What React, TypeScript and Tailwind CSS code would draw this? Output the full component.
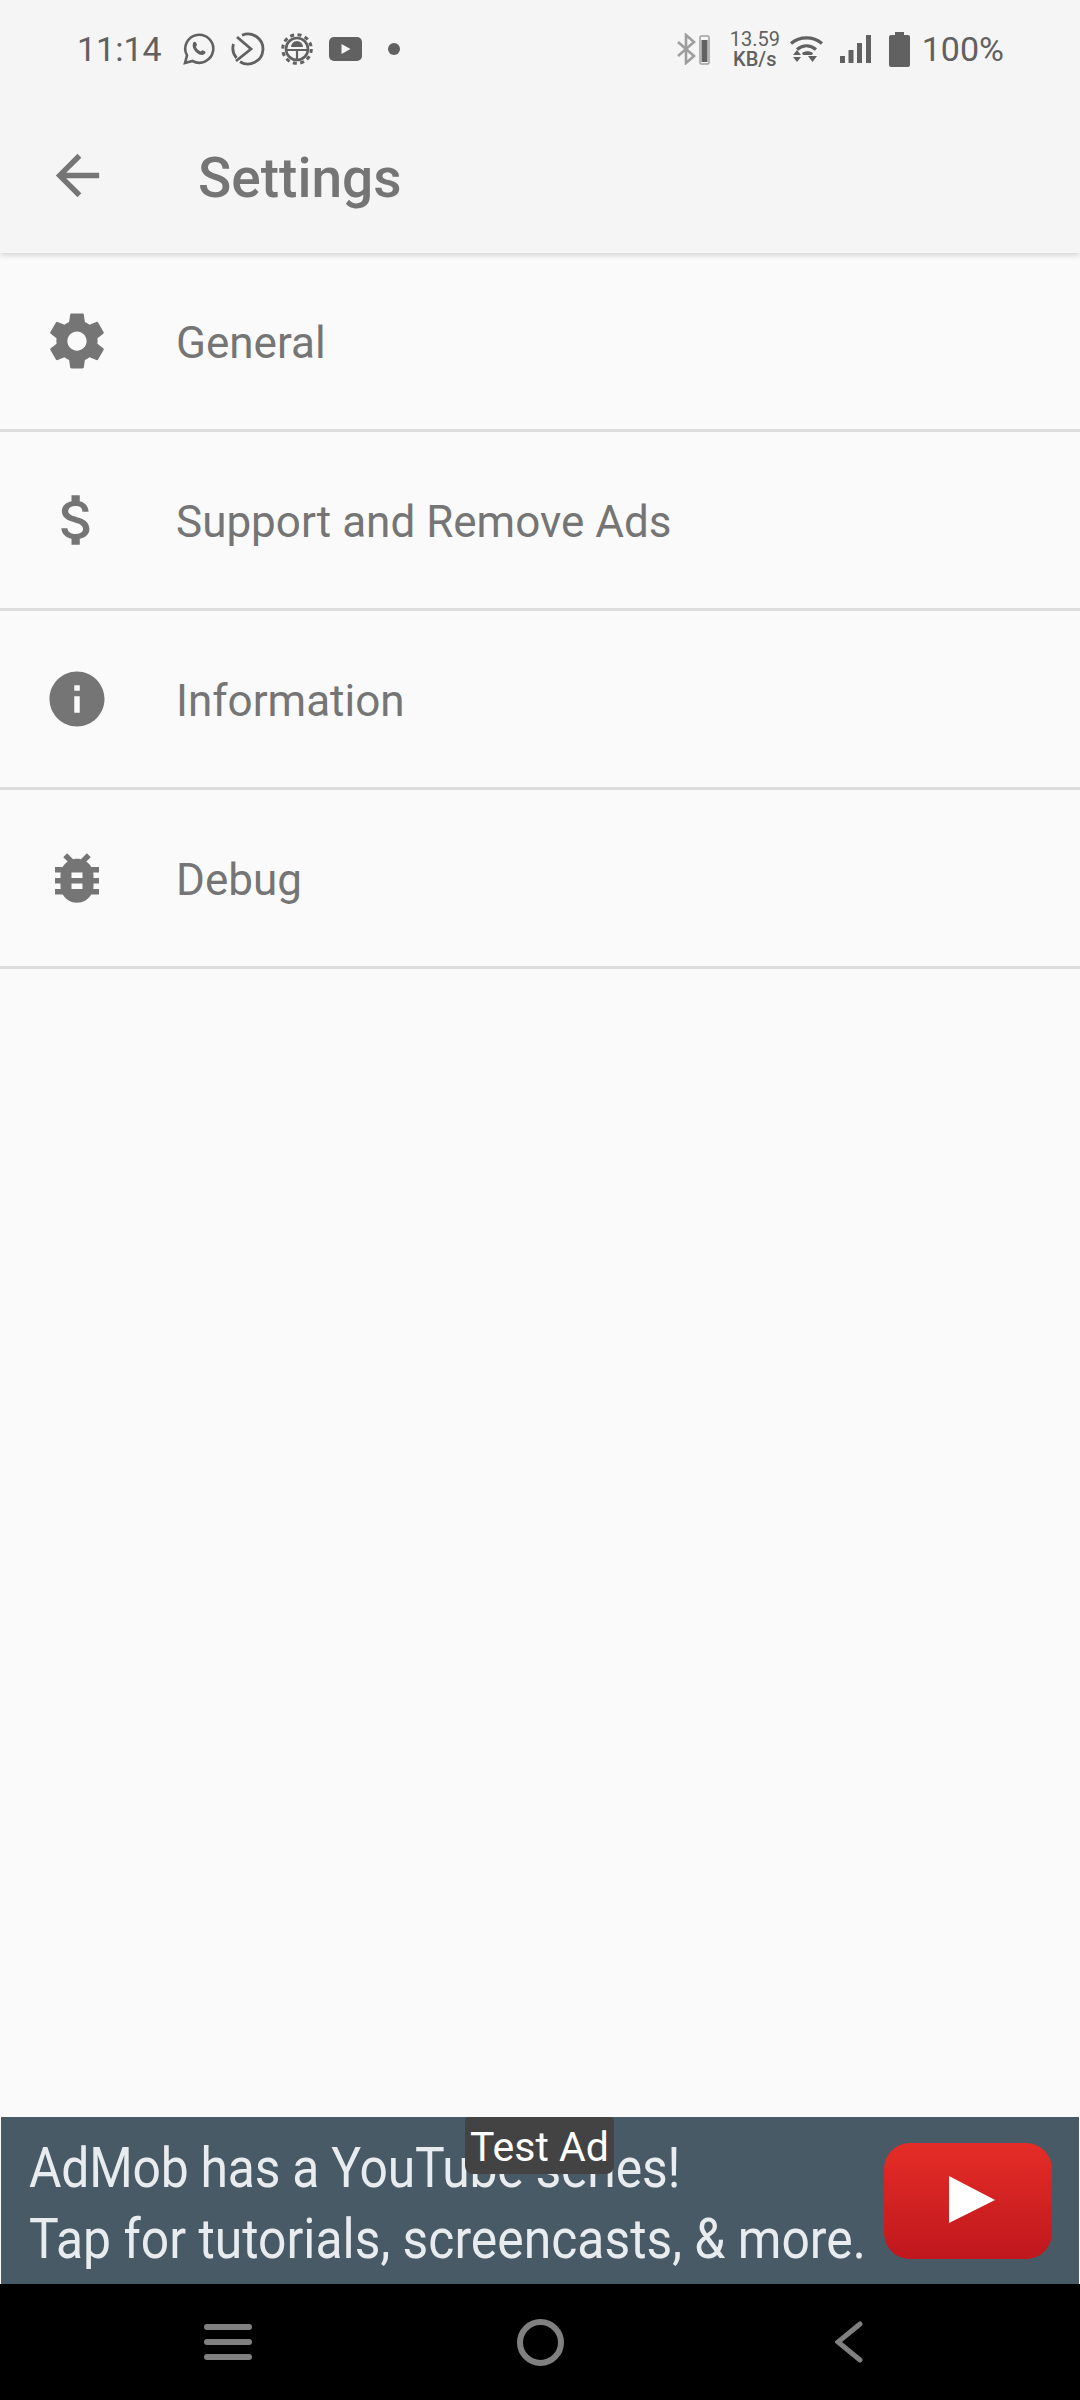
const rows = [
  { label: "General", icon: <GearIcon /> },
  { label: "Support and Remove Ads", icon: <DollarIcon /> },
  { label: "Information", icon: <InfoIcon /> },
  { label: "Debug", icon: <BugIcon /> },
];

function GearIcon() {
  return (
    <svg width="66" height="66" viewBox="0 0 24 24" fill="#757575">
      <path d="M19.43 12.98c.04-.32.07-.64.07-.98s-.03-.66-.07-.98l2.11-1.65c.19-.15.24-.42.12-.64l-2-3.46c-.12-.22-.39-.3-.61-.22l-2.49 1c-.52-.4-1.08-.73-1.69-.98l-.38-2.65C14.46 2.18 14.25 2 14 2h-4c-.25 0-.46.18-.49.42l-.38 2.65c-.61.25-1.17.59-1.69.98l-2.49-1c-.23-.09-.49 0-.61.22l-2 3.46c-.13.22-.07.49.12.64l2.11 1.65c-.04.32-.07.65-.07.98s.03.66.07.98l-2.11 1.65c-.19.15-.24.42-.12.64l2 3.46c.12.22.39.3.61.22l2.49-1c.52.4 1.08.73 1.69.98l.38 2.65c.03.24.24.42.49.42h4c.25 0 .46-.18.49-.42l.38-2.65c.61-.25 1.17-.59 1.69-.98l2.49 1c.23.09.49 0 .61-.22l2-3.46c.12-.22.07-.49-.12-.64l-2.11-1.65zM12 15.5c-1.93 0-3.5-1.57-3.5-3.5s1.57-3.5 3.5-3.5 3.5 1.57 3.5 3.5-1.57 3.5-3.5 3.5z" />
    </svg>
  );
}

function DollarIcon() {
  return (
    <svg width="66" height="66" viewBox="0 0 24 24" fill="#757575">
      <path d="M11.8 10.9c-2.27-.59-3-1.2-3-2.15 0-1.09 1.01-1.85 2.7-1.85 1.78 0 2.44.85 2.5 2.1h2.21c-.07-1.72-1.12-3.3-3.21-3.81V3h-3v2.16c-1.94.42-3.5 1.68-3.5 3.61 0 2.31 1.91 3.46 4.7 4.13 2.5.6 3 1.48 3 2.41 0 .69-.49 1.79-2.7 1.79-2.06 0-2.87-.92-2.98-2.1h-2.2c.12 2.19 1.76 3.42 3.68 3.83V21h3v-2.15c1.95-.37 3.5-1.5 3.5-3.55 0-2.84-2.43-3.81-4.7-4.4z" />
    </svg>
  );
}

function InfoIcon() {
  return (
    <svg width="66" height="66" viewBox="0 0 24 24" fill="#757575">
      <path d="M12 2C6.48 2 2 6.48 2 12s4.48 10 10 10 10-4.48 10-10S17.52 2 12 2zm1 15h-2v-6h2v6zm0-8h-2V7h2v2z" />
    </svg>
  );
}

function BugIcon() {
  return (
    <svg width="66" height="66" viewBox="0 0 24 24" fill="#757575">
      <path d="M20 8h-2.81c-.45-.78-1.07-1.45-1.82-1.96L17 4.41 15.59 3l-2.17 2.17C12.96 5.06 12.49 5 12 5s-.96.06-1.41.17L8.41 3 7 4.41l1.62 1.63C7.88 6.55 7.26 7.22 6.81 8H4v2h2.09c-.05.33-.09.66-.09 1v1H4v2h2v1c0 .34.04.67.09 1H4v2h2.81c1.04 1.79 2.97 3 5.19 3s4.15-1.21 5.19-3H20v-2h-2.09c.05-.33.09-.66.09-1v-1h2v-2h-2v-1c0-.34-.04-.67-.09-1H20V8zm-6 8h-4v-2h4v2zm0-4h-4v-2h4v2z" />
    </svg>
  );
}

function StatusBar() {
  return (
    <div className="flex h-[87px] items-center justify-between pl-[77px] pr-[76px] pt-[11px] text-[#616161]">
      <div className="flex items-center">
        <span className="w-[106px] text-[34px] leading-none">11:14</span>
        <svg width="32" height="32" viewBox="0 0 32 32" fill="none" stroke="#616161" strokeWidth="2.6">
          <path d="M2 30l2-7.500A14 14 0 1 1 9.500 28z" />
          <path d="M10.500 9.500c1-1 2-1 2.500 0l1 2c.3.700-1.200 1.500-1 2.500.6 1.800 2.500 3.600 4.300 4.200 1 .2 1.800-1.300 2.500-1l2 1c1 .5 1 1.500 0 2.500-2 2-5 1.500-8-1s-5.500-6.500-3.300-10.700z" fill="#616161" stroke="none" />
        </svg>
        <svg className="ml-[16px]" width="34" height="34" viewBox="0 0 34 34" fill="none" stroke="#616161" strokeWidth="2.800">
          <path d="M11 3.200A15 15 0 1 1 9 29.700" />
          <path d="M2.500 12A15 15 0 0 0 5.500 26" />
          <path d="M6 5l14 12-15 12" />
        </svg>
        <svg className="ml-[16px]" width="32" height="32" viewBox="0 0 32 32" fill="none" stroke="#616161">
          <circle cx="16" cy="16" r="11" strokeWidth="2.600" />
          <circle cx="16" cy="16" r="14.300" strokeWidth="3" strokeDasharray="4 3.500" />
          <path d="M10 14a6 6 0 0 1 12 0z" fill="#616161" stroke="none" />
          <path d="M5 17h22M16 17v10" strokeWidth="2.200" />
        </svg>
        <svg className="ml-[16px]" width="33" height="24" viewBox="0 0 33 24">
          <rect width="33" height="24" rx="5" fill="#616161" />
          <path d="M12.500 7l9 5-9 5z" fill="#f5f5f5" />
        </svg>
        <span className="ml-[26px] h-[12px] w-[12px] rounded-full bg-[#616161]" />
      </div>
      <div className="flex items-center">
        <svg width="34" height="32" viewBox="0 0 34 32" fill="none">
          <path d="M1 9l16 14-8 7V2l8 7L1 23" stroke="#9e9e9e" strokeWidth="2.600" />
          <rect x="23" y="3" width="9" height="28" rx="1.500" stroke="#9e9e9e" strokeWidth="1.500" />
          <rect x="24.500" y="7" width="6" height="22" fill="#616161" />
        </svg>
        <div className="ml-[19px] flex w-[50px] flex-col items-center text-[20px] leading-[20px]">
          <span>13.59</span>
          <span className="font-medium">KB/s</span>
        </div>
        <svg className="ml-[10px]" width="33" height="27" viewBox="0 0 33 27" fill="none" stroke="#616161" strokeWidth="3.200">
          <path d="M1 7.500C10 0 23 0 32 7.500" />
          <path d="M7 13.500c6-5 13-5 19 0" />
          <path d="M3 19l4-5 4 5zM3 21h8l-4 5zM12 17c3-2.500 8-2.500 11 0l-1 2H13zM18 20h9l-4.500 6z" fill="#616161" stroke="none" />
        </svg>
        <svg className="ml-[17px]" width="31" height="28" viewBox="0 0 31 28" fill="#616161">
          <rect x="0" y="21" width="5" height="7" />
          <rect x="8.500" y="15" width="5" height="13" />
          <rect x="17" y="8" width="5" height="20" />
          <rect x="26" y="0" width="5" height="28" />
        </svg>
        <svg className="ml-[18px]" width="21" height="35" viewBox="0 0 21 35" fill="#616161">
          <path d="M6 0h9v3h4a2 2 0 0 1 2 2v28a2 2 0 0 1-2 2H2a2 2 0 0 1-2-2V5a2 2 0 0 1 2-2h4z" />
        </svg>
        <span className="ml-[12px] text-[34px] leading-none">100%</span>
      </div>
    </div>
  );
}

function NavBar() {
  return (
    <div className="flex h-[116px] items-center bg-black pl-[204px] pr-[217px]">
      <div className="flex w-[48px] flex-col gap-[9px]">
        <span className="h-[6px] rounded-full bg-[#808080]" />
        <span className="h-[6px] rounded-full bg-[#808080]" />
        <span className="h-[6px] rounded-full bg-[#808080]" />
      </div>
      <span className="ml-[265px] h-[47px] w-[47px] rounded-full border-[6px] border-[#808080]" />
      <svg className="ml-auto" width="28" height="42" viewBox="0 0 28 42" fill="none" stroke="#808080" strokeWidth="5" strokeLinecap="round">
        <path d="M25 3L3 21l22 18" />
      </svg>
    </div>
  );
}

export default function App() {
  return (
    <div className="flex h-[2400px] w-[1080px] flex-col overflow-hidden bg-[#fafafa] font-['Roboto',sans-serif]">
      <header className="relative z-10 h-[253px] bg-[#f5f5f5] shadow-[0_2px_6px_rgba(0,0,0,0.16)]">
        <StatusBar />
        <div className="flex h-[166px] items-center pl-[45px] pt-[10px]">
          <svg width="65" height="65" viewBox="0 0 24 24" fill="#757575">
            <path d="M20 11H7.830l5.590-5.590L12 4l-8 8 8 8 1.410-1.410L7.830 13H20v-2z" />
          </svg>
          <h1 className="ml-[88px] mt-[6px] text-[55px] font-medium leading-none text-[#757575]">Settings</h1>
        </div>
      </header>

      <main className="min-h-0 flex-1">
        {rows.map((row) => (
          <div key={row.label} className="flex h-[179px] items-center border-b-[3px] border-[#dcdcdc] pl-[44px]">
            {row.icon}
            <span className="ml-[66px] mt-[4px] text-[44px] leading-none text-[#757575]">{row.label}</span>
          </div>
        ))}
      </main>

      <div className="relative mx-[1px] flex h-[167px] items-center bg-[#485a65] pl-[28px] pr-[27px]">
        <div className="mt-[6px] w-[834px] shrink-0 origin-left scale-x-[0.89] whitespace-nowrap text-[56px] leading-[71px] text-[#e8ecee]">
          <div className="tracking-[-0.25px]">AdMob has a YouTube series!</div>
          <div>Tap for tutorials, screencasts, &amp; more.</div>
        </div>
        <svg className="ml-auto" width="168" height="116" viewBox="0 0 168 116">
          <defs>
            <linearGradient id="yt" x1="0" y1="0" x2="0" y2="1">
              <stop offset="0" stopColor="#e52d27" />
              <stop offset="1" stopColor="#bf171d" />
            </linearGradient>
          </defs>
          <rect width="168" height="116" rx="26" fill="url(#yt)" />
          <path d="M65 33l46 24-46 23z" fill="#fff" />
        </svg>
        <div className="absolute left-[464px] top-0 flex h-[57px] w-[149px] items-center justify-center rounded-b-[8px] rounded-t-[4px] bg-[#434343] pt-[3px] text-[41px] leading-none text-white">
          Test Ad
        </div>
      </div>
      <NavBar />
    </div>
  );
}
